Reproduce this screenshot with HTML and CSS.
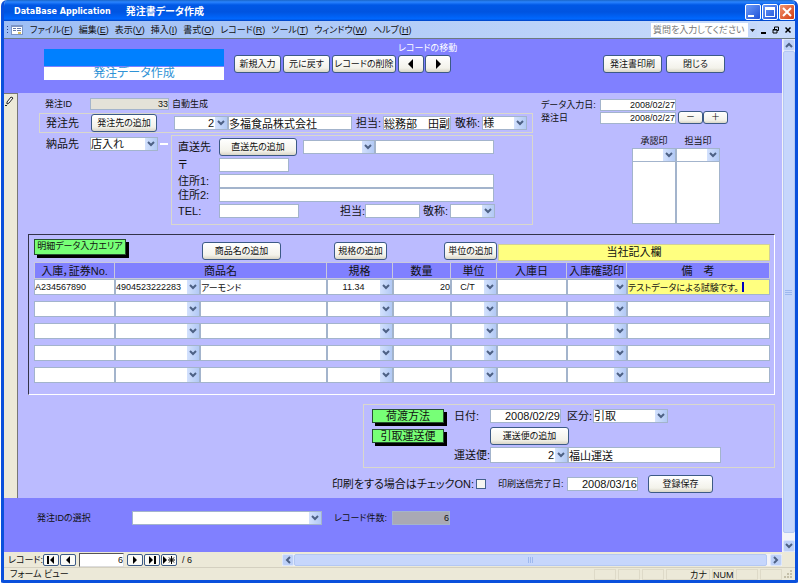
FILE: index.html
```html
<!DOCTYPE html>
<html lang="ja">
<head>
  <meta charset="UTF-8">
  <meta name="viewport" content="width=device-width, initial-scale=1.0">
  <title>発注書データ作成</title>
  <link rel="stylesheet" href="styles.css">
</head>
<body>
  <div class="window">
    <header class="titlebar">
      <h1><span>DataBase Application</span><span>発注書データ作成</span></h1>
      <div class="window-buttons">
        <button type="button" aria-label="最小化"><svg width="16" height="16"><path d="M3 11h6v2H3z" fill="#fff"/></svg></button>
        <button type="button" aria-label="最大化"><svg width="16" height="16"><path d="M3 3h10v10H3zM4 6v6h8V6z" fill="#fff" fill-rule="evenodd"/></svg></button>
        <button type="button" class="close" aria-label="閉じる"><svg width="16" height="16"><path d="M4 4l8 8M12 4l-8 8" stroke="#fff" stroke-width="2"/></svg></button>
      </div>
    </header>

    <nav class="menubar">
      <svg class="grip" width="2" height="10"><path d="M0 1h1v1H0zM0 4h1v1H0zM0 7h1v1H0z" fill="#27418f"/></svg>
      <svg class="form-icon" width="12" height="10"><path d="M0 0h12v10H0z" fill="#7b93c4"/><path d="M1 2h10v7H1z" fill="#fff"/><path d="M2 3h3v1H2zM2 5h3v1H2zM6 3h4v1H6zM6 5h4v1H6z" fill="#6679a8"/><path d="M7 7h3v2H7z" fill="#d8c060"/></svg>
      <button type="button">ファイル(<u>F</u>)</button>
      <button type="button">編集(<u>E</u>)</button>
      <button type="button">表示(<u>V</u>)</button>
      <button type="button">挿入(<u>I</u>)</button>
      <button type="button">書式(<u>O</u>)</button>
      <button type="button">レコード(<u>R</u>)</button>
      <button type="button">ツール(<u>T</u>)</button>
      <button type="button">ウィンドウ(<u>W</u>)</button>
      <button type="button">ヘルプ(<u>H</u>)</button>
      <input class="question" type="text" placeholder="質問を入力してください" aria-label="質問">
      <svg class="question-arrow" width="9" height="14"><path d="M2 6h5L4.500 9z" fill="#222"/></svg>
      <div class="child-buttons">
        <button type="button" aria-label="ウィンドウの最小化"><svg width="8" height="8"><path d="M1 6h5v2H1z"/></svg></button>
        <button type="button" aria-label="元のサイズに戻す"><svg width="8" height="8"><path d="M2.500 3V1h4v3.500H5M1 3.500h4V7H1zM1 4h4" fill="none" stroke="#000"/></svg></button>
        <button type="button" aria-label="ウィンドウを閉じる"><svg width="8" height="8"><path d="M1.500 1.500l5 5M6.500 1.500l-5 5" stroke="#000" stroke-width="1.500"/></svg></button>
      </div>
    </nav>

    <div class="workspace">
      <main class="sheet">
        <section class="form-header">
          <div class="banner">
            <div class="banner-bar"></div>
            <h2>発注データ作成</h2>
          </div>
          <div class="header-actions">
            <button type="button" class="btn">新規入力</button>
            <button type="button" class="btn">元に戻す</button>
            <button type="button" class="btn btn-delete">レコードの削除</button>
          </div>
          <div class="record-move">
            <span>レコードの移動</span>
            <div class="move-buttons">
              <button type="button" class="btn" aria-label="前のレコード"><svg width="8" height="10"><path d="M6 0v10L1 5z"/></svg></button>
              <button type="button" class="btn" aria-label="次のレコード"><svg width="8" height="10"><path d="M2 0v10l5-5z"/></svg></button>
            </div>
          </div>
          <div class="header-actions header-right">
            <button type="button" class="btn">発注書印刷</button>
            <button type="button" class="btn">閉じる</button>
          </div>
        </section>

        <div class="form-body">
          <div class="selector">
            <svg width="10" height="10"><path d="M2 6l4-5 2 1-4 5-2 1z" fill="#fff" stroke="#222"/><path d="M0 9.500h2" stroke="#222"/></svg>
          </div>

          <div class="form">
            <div class="top">
              <div class="top-left">
                <div class="row row-id">
                  <label class="small" for="order-id">発注ID</label>
                  <input id="order-id" class="num locked" type="text" value="33" readonly>
                  <span class="small">自動生成</span>
                </div>

                <div class="frame row row-supplier">
                  <label for="supplier">発注先</label>
                  <button type="button" class="btn">発注先の追加</button>
                  <select id="supplier" class="num"><option>2</option></select>
                  <input class="supplier-name" type="text" value="多福食品株式会社" aria-label="発注先名">
                  <label for="supplier-person">担当:</label>
                  <input id="supplier-person" class="person" type="text" value="総務部　田副">
                  <label for="supplier-title">敬称:</label>
                  <select id="supplier-title" class="honor"><option>様</option></select>
                </div>

                <div class="delivery">
                  <div class="row row-place">
                    <label for="place">納品先</label>
                    <select id="place"><option>店入れ</option></select>
                    <span class="connector"></span>
                  </div>
                  <div class="frame direct">
                    <div class="row row-direct">
                      <label for="direct">直送先</label>
                      <button type="button" class="btn">直送先の追加</button>
                      <select id="direct"><option></option></select>
                      <input class="direct-name" type="text" aria-label="直送先名">
                    </div>
                    <div class="row"><label for="zip">〒</label><input id="zip" type="text"></div>
                    <div class="row"><label for="address1">住所1:</label><input id="address1" class="address" type="text"></div>
                    <div class="row joined"><label for="address2">住所2:</label><input id="address2" class="address" type="text"></div>
                    <div class="row row-tel">
                      <label for="tel">TEL:</label>
                      <input id="tel" type="text">
                      <label class="contact-label" for="direct-person">担当:</label>
                      <input id="direct-person" type="text">
                      <label class="honor-label" for="direct-title">敬称:</label>
                      <select id="direct-title" class="honor"><option></option></select>
                    </div>
                  </div>
                </div>
              </div>

              <div class="top-right">
                <div class="row small">
                  <label for="entry-date">データ入力日:</label>
                  <input id="entry-date" class="num" type="text" value="2008/02/27">
                </div>
                <div class="row small">
                  <label for="order-date">発注日</label>
                  <input id="order-date" class="num" type="text" value="2008/02/27">
                  <div class="step-buttons">
                    <button type="button" class="btn">－</button>
                    <button type="button" class="btn">＋</button>
                  </div>
                </div>
                <div class="stamps">
                  <div class="stamp">
                    <label class="small" for="approve">承認印</label>
                    <select id="approve"><option></option></select>
                    <div class="stamp-box"></div>
                  </div>
                  <div class="stamp">
                    <label class="small" for="charge">担当印</label>
                    <select id="charge"><option></option></select>
                    <div class="stamp-box"></div>
                  </div>
                </div>
              </div>
            </div>

            <section class="detail">
              <div class="detail-tools">
                <span class="tag tag-area">明細データ入力エリア</span>
                <button type="button" class="btn btn-item">商品名の追加</button>
                <button type="button" class="btn">規格の追加</button>
                <button type="button" class="btn">単位の追加</button>
                <div class="own-entry">当社記入欄</div>
              </div>
              <table>
                <colgroup>
                  <col class="c-voucher"><col class="c-code"><col class="c-name"><col class="c-spec"><col class="c-qty"><col class="c-unit"><col class="c-date"><col class="c-check"><col>
                </colgroup>
                <thead>
                  <tr>
                    <th>入庫，証券No.</th>
                    <th colspan="2">商品名</th>
                    <th>規格</th>
                    <th>数量</th>
                    <th>単位</th>
                    <th>入庫日</th>
                    <th>入庫確認印</th>
                    <th>備　考</th>
                  </tr>
                </thead>
                <tbody>
                  <tr>
                    <td><input type="text" value="A234567890" aria-label="証券No."></td>
                    <td><select aria-label="商品コード"><option>4904523222283</option></select></td>
                    <td><input type="text" value="アーモンド" aria-label="商品名"></td>
                    <td><select class="center" aria-label="規格"><option>11.34</option></select></td>
                    <td><input class="num" type="text" value="20" aria-label="数量"></td>
                    <td><select class="center" aria-label="単位"><option>C/T</option></select></td>
                    <td><input type="text" aria-label="入庫日"></td>
                    <td><select aria-label="入庫確認印"><option></option></select></td>
                    <td><input class="editing" type="text" value="テストデータによる試験です。" aria-label="備考"></td>
                  </tr>
                  <tr>
                    <td><input type="text" aria-label="証券No."></td>
                    <td><select aria-label="商品コード"><option></option></select></td>
                    <td><input type="text" aria-label="商品名"></td>
                    <td><select aria-label="規格"><option></option></select></td>
                    <td><input type="text" aria-label="数量"></td>
                    <td><select aria-label="単位"><option></option></select></td>
                    <td><input type="text" aria-label="入庫日"></td>
                    <td><select aria-label="入庫確認印"><option></option></select></td>
                    <td><input type="text" aria-label="備考"></td>
                  </tr>
                  <tr>
                    <td><input type="text" aria-label="証券No."></td>
                    <td><select aria-label="商品コード"><option></option></select></td>
                    <td><input type="text" aria-label="商品名"></td>
                    <td><select aria-label="規格"><option></option></select></td>
                    <td><input type="text" aria-label="数量"></td>
                    <td><select aria-label="単位"><option></option></select></td>
                    <td><input type="text" aria-label="入庫日"></td>
                    <td><select aria-label="入庫確認印"><option></option></select></td>
                    <td><input type="text" aria-label="備考"></td>
                  </tr>
                  <tr>
                    <td><input type="text" aria-label="証券No."></td>
                    <td><select aria-label="商品コード"><option></option></select></td>
                    <td><input type="text" aria-label="商品名"></td>
                    <td><select aria-label="規格"><option></option></select></td>
                    <td><input type="text" aria-label="数量"></td>
                    <td><select aria-label="単位"><option></option></select></td>
                    <td><input type="text" aria-label="入庫日"></td>
                    <td><select aria-label="入庫確認印"><option></option></select></td>
                    <td><input type="text" aria-label="備考"></td>
                  </tr>
                  <tr>
                    <td><input type="text" aria-label="証券No."></td>
                    <td><select aria-label="商品コード"><option></option></select></td>
                    <td><input type="text" aria-label="商品名"></td>
                    <td><select aria-label="規格"><option></option></select></td>
                    <td><input type="text" aria-label="数量"></td>
                    <td><select aria-label="単位"><option></option></select></td>
                    <td><input type="text" aria-label="入庫日"></td>
                    <td><select aria-label="入庫確認印"><option></option></select></td>
                    <td><input type="text" aria-label="備考"></td>
                  </tr>
                </tbody>
              </table>
            </section>

            <section class="frame shipping">
              <div class="ship-tags">
                <span class="tag">荷渡方法</span>
                <span class="tag">引取運送便</span>
              </div>
              <div class="ship-fields">
                <div class="row row-shipdate">
                  <label for="ship-date">日付:</label>
                  <input id="ship-date" class="num" type="text" value="2008/02/29">
                  <label class="kind-label" for="ship-kind">区分:</label>
                  <select id="ship-kind"><option>引取</option></select>
                </div>
                <div class="row row-carrier-add">
                  <button type="button" class="btn">運送便の追加</button>
                </div>
                <div class="row row-carrier">
                  <label for="carrier">運送便:</label>
                  <select id="carrier" class="num"><option>2</option></select>
                  <input type="text" value="福山運送" aria-label="運送便名">
                </div>
              </div>
            </section>

            <div class="row print-row">
              <label for="print-on">印刷をする場合はチェックON:</label>
              <input id="print-on" type="checkbox">
              <label class="small sent-label" for="sent-date">印刷送信完了日:</label>
              <input id="sent-date" class="num" type="text" value="2008/03/16">
              <button type="button" class="btn">登録保存</button>
            </div>
          </div>
        </div>

        <footer class="form-footer">
          <label for="pick-id">発注IDの選択</label>
          <select id="pick-id"><option></option></select>
          <label class="count-label" for="count">レコード件数:</label>
          <input id="count" class="num" type="text" value="6" readonly>
        </footer>
      </main>

      <div class="vscroll">
        <button type="button" aria-label="上へ"><svg width="8" height="6"><path d="M1 5l3-3 3 3" fill="none" stroke="#4d6185" stroke-width="2"/></svg></button>
        <div class="thumb"><svg width="8" height="5"><path d="M0 .5h7M0 2.500h7M0 4.500h7" stroke="#9db8ee"/></svg></div>
        <button type="button" aria-label="下へ"><svg width="8" height="6"><path d="M1 1l3 3 3-3" fill="none" stroke="#4d6185" stroke-width="2"/></svg></button>
      </div>
    </div>

    <div class="record-nav">
      <label for="record-no">レコード:</label>
      <button type="button" aria-label="先頭"><svg width="10" height="8"><path d="M1 0h2v8H1zM8 0v8L4 4z"/></svg></button>
      <button type="button" aria-label="前"><svg width="10" height="8"><path d="M7 0v8L3 4z"/></svg></button>
      <input id="record-no" class="num" type="text" value="6">
      <button type="button" aria-label="次"><svg width="10" height="8"><path d="M3 0v8l4-4z"/></svg></button>
      <button type="button" aria-label="最後"><svg width="10" height="8"><path d="M2 0v8l4-4zM7 0h2v8H7z"/></svg></button>
      <button type="button" aria-label="新規"><svg width="12" height="8"><path d="M0 0v8l4-4z"/><path d="M8.500 0v8M5 4h7M6 1.500l5 5M11 1.500l-5 5" stroke="#000"/></svg></button>
      <span class="total">/ 6</span>
      <div class="hscroll">
        <button type="button" aria-label="左へ"><svg width="6" height="8"><path d="M5 1L2 4l3 3" fill="none" stroke="#4d6185" stroke-width="2"/></svg></button>
        <div class="thumb"><svg width="6" height="6"><path d="M.5 0v6M2.500 0v6M4.500 0v6" stroke="#9db8ee"/></svg></div>
        <button type="button" aria-label="右へ"><svg width="6" height="8"><path d="M1 1l3 3-3 3" fill="none" stroke="#4d6185" stroke-width="2"/></svg></button>
      </div>
    </div>

    <div class="statusbar">
      <span class="status-text">フォーム ビュー</span>
      <span class="cell"></span>
      <span class="cell"></span>
      <span class="cell"></span>
      <span class="cell cell-kana">カナ</span>
      <span class="cell">NUM</span>
      <span class="cell"></span>
      <span class="cell"></span>
      <svg width="9" height="9"><path d="M6 0h2v2H6zM3 3h2v2H3zM6 3h2v2H6zM0 6h2v2H0zM3 6h2v2H3zM6 6h2v2H6z" fill="#c4bfa8"/></svg>
    </div>
  </div>
</body>
</html>
```
FILE: styles.css
```css
* {
  box-sizing: border-box;
}

body {
  margin: 0;
  background: #fff;
  color: #111;
  font-family: "Liberation Sans", "Noto Sans CJK JP", sans-serif;
  font-size: 11px;
  line-height: 14px;
  font-feature-settings: "palt";
}

h1, h2 {
  margin: 0;
}

button, input, select {
  font: inherit;
  font-feature-settings: inherit;
  color: inherit;
  margin: 0;
  padding: 0;
}

svg {
  display: block;
  flex: none;
}

label, span, button {
  white-space: nowrap;
}

/* window */
.window {
  margin: 0 2px 0 1px;
  border: 3px solid #0a50dc;
  border-top: 0;
  border-radius: 6px 6px 2px 2px;
  background: #ece9d8;
  overflow: hidden;
}

.titlebar {
  display: flex;
  justify-content: space-between;
  height: 21px;
  margin: 0 -3px;
  padding: 4px 3px 0 13px;
  background: linear-gradient(#1a66c8 0, #2a84ff 2px, #0058e6 5px, #0054e0 12px, #0068ff 19px, #0040c0 21px);
}

.titlebar h1 {
  display: flex;
  gap: 15px;
  color: #fff;
  font-size: 10px;
  line-height: 16px;
}

.titlebar h1 span:first-child {
  font-family: "DejaVu Sans", sans-serif;
  font-size: 8px;
}

.window-buttons {
  display: flex;
  gap: 1px;
}

.window-buttons button {
  width: 16px;
  height: 16px;
  border: 1px solid #fff;
  border-radius: 2px;
  background: linear-gradient(135deg, #6c9bf8, #1f52d8);
  overflow: hidden;
}

.window-buttons svg {
  margin: -1px;
}

.window-buttons .close {
  background: linear-gradient(135deg, #f0936f, #d43c10);
}

/* menu */
.menubar {
  display: flex;
  align-items: center;
  height: 18px;
  padding: 0 3px;
  border-bottom: 1px solid #6d7a80;
  background: linear-gradient(90deg, #9ebef5, #c9dcfb);
  font-size: 9px;
}

.menubar button {
  margin-right: 6px;
  border: 0;
  background: none;
}

.form-icon {
  margin: 0 7px 0 2px;
}

.menubar .question {
  width: 97px;
  height: 14px;
  margin-left: auto;
  padding-left: 2px;
  border: 0;
  background: #fff;
}

.question::placeholder {
  color: #777;
}

.question-arrow {
  background: #c4d8fa;
}

.child-buttons {
  display: flex;
  gap: 4px;
  margin-left: 3px;
}

.child-buttons button {
  width: 8px;
  margin: 0;
}

.workspace {
  display: flex;
}

.sheet {
  flex: 1;
  min-width: 0;
}

/* controls */
.btn {
  height: 18px;
  border: 1px solid #3c5a86;
  border-radius: 3px;
  background: linear-gradient(#fff, #f3f2ea 75%, #d9d5c6);
  font-size: 9px;
  line-height: 14px;
  text-align: center;
}

.btn svg {
  margin: 0 auto;
}

input[type="text"],
select {
  min-width: 0;
  height: 14px;
  border: 1px solid #a3b4cc;
  border-radius: 0;
  background-color: #fff;
  line-height: 12px;
  outline: 0;
}

select {
  appearance: none;
  padding-right: 13px;
  background-image:
    url("data:image/svg+xml,%3Csvg xmlns='http://www.w3.org/2000/svg' width='12' height='6'%3E%3Cpath d='M3 1l3 3 3-3' fill='none' stroke='%234d6185' stroke-width='2'/%3E%3C/svg%3E"),
    linear-gradient(90deg, #d3e1fd, #b2c9f5);
  background-position: right center, right top;
  background-size: 12px 6px, 12px 100%;
  background-repeat: no-repeat;
}

.num {
  text-align: right;
  text-align-last: right;
}

.center {
  text-align-last: center;
}

.small,
.small input {
  font-size: 9px;
}

.row {
  display: flex;
  align-items: center;
}

.row > * {
  flex: none;
}

.frame {
  border: 1px solid #d9d8cc;
}

.tag {
  border: 1px solid #264f30;
  background: #77ff77;
  box-shadow: 3px 3px 0 #000;
  line-height: 12px;
  text-align: center;
}

/* form header */
.form-header {
  display: flex;
  height: 54px;
  padding: 0 57px 0 40px;
  background: #8080ff;
}

.banner {
  width: 180px;
  margin: 10px 10px 0 0;
}

.banner-bar {
  height: 17px;
  background: #0080ff;
}

.banner h2 {
  margin-top: 1px;
  background: #fff;
  color: #2f93d6;
  font-size: 12px;
  font-weight: normal;
  line-height: 13px;
  text-align: center;
}

.header-actions {
  display: flex;
  gap: 2px;
  padding-top: 16px;
}

.header-actions .btn {
  width: 47px;
}

.header-actions .btn-delete {
  width: 64px;
}

.record-move {
  margin-left: 2px;
  padding-top: 2px;
  color: #fff;
  font-size: 9px;
}

.record-move span {
  display: block;
}

.move-buttons {
  display: flex;
  gap: 1px;
}

.move-buttons .btn {
  width: 26px;
}

.header-right {
  gap: 4px;
  margin-left: auto;
}

.header-right .btn {
  width: 59px;
}

/* form body */
.form-body {
  display: flex;
  background: #bbbbff;
}

.selector {
  width: 14px;
  padding: 2px 1px;
  border: 1px solid #777;
  border-width: 1px 1px 0 0;
  background: #ece9d8;
}

.form {
  flex: 1;
  min-width: 0;
  padding: 5px 7px 5px 10px;
}

.top {
  display: flex;
  gap: 8px;
  margin-left: 11px;
}

.top-left {
  width: 494px;
}

.row-id {
  margin-bottom: 3px;
  padding-left: 6px;
  line-height: 12px;
}

.row-id label {
  width: 45px;
}

.row-id input[type="text"] {
  width: 79px;
  height: 12px;
  margin-right: 3px;
  background: #e4e2d8;
  font-size: 9px;
  line-height: 10px;
}

.row-supplier {
  margin-bottom: 2px;
  padding-left: 6px;
}

.row-supplier .btn {
  width: 66px;
  margin: 0 17px 0 12px;
}

.row-supplier select {
  width: 54px;
}

.row-supplier .supplier-name {
  width: 124px;
  margin-right: 4px;
}

.row-supplier .person {
  width: 68px;
  margin: 0 4px 0 2px;
}

.row .honor {
  width: 45px;
  margin-left: 2px;
}

.delivery {
  display: flex;
}

.row-place {
  align-self: flex-start;
  padding: 2px 3px 0 7px;
}

.row-place label {
  width: 44px;
}

.row-place select {
  width: 68px;
}

.connector {
  width: 8px;
  height: 2px;
  margin-left: 2px;
  background: #fff;
}

.direct {
  flex: 1;
  padding: 2px 0 6px 6px;
}

.direct .row + .row {
  margin-top: 2px;
}

.direct .row + .joined {
  margin-top: 0;
}

.direct label:first-child {
  width: 41px;
}

.direct .btn {
  width: 78px;
  margin-right: 6px;
}

.row-direct select {
  width: 72px;
}

.row-direct .direct-name {
  width: 119px;
}

.direct #zip {
  width: 70px;
}

.direct .address {
  width: 275px;
}

.row-tel #tel {
  width: 80px;
}

.row-tel .contact-label {
  margin-left: 41px;
}

.row-tel #direct-person {
  width: 55px;
}

.row-tel .honor-label {
  margin-left: 3px;
}

.top-right .row {
  height: 13px;
}

.top-right .row label {
  width: 59px;
}

.top-right .row input {
  width: 76px;
  height: 12px;
  line-height: 10px;
}

.step-buttons {
  display: flex;
  margin-left: 2px;
}

.step-buttons .btn {
  width: 25px;
  height: 13px;
  line-height: 11px;
}

.stamps {
  display: flex;
  width: 88px;
  margin: 10px 0 0 91px;
}

.stamp {
  flex: 1;
  display: flex;
  flex-direction: column;
  text-align: center;
}

.stamp-box {
  height: 62px;
  border: 1px solid #a3b4cc;
  border-top: 0;
  background: #fff;
}

/* detail lines */
.detail {
  margin-top: 9px;
  padding: 4px 4px 5px 5px;
  border: 1px solid;
  border-color: #33334a #fff #fff #33334a;
}

.detail-tools {
  display: grid;
  grid-template-columns: 168px 132px 110px 54px 1fr;
  align-items: end;
}

.tag-area {
  justify-self: start;
  align-self: start;
  width: 92px;
  height: 16px;
  font-size: 9px;
}

.detail-tools .btn {
  width: 53px;
  margin: 3px 0 2px;
}

.detail-tools .btn-item {
  width: 79px;
}

.own-entry {
  margin-bottom: 1px;
  border: 1px solid #cfcf9c;
  background: #ffff80;
  line-height: 15px;
  text-align: center;
}

table {
  width: 100%;
  border-spacing: 0;
  table-layout: fixed;
}

.c-voucher { width: 81px; }
.c-code { width: 85px; }
.c-name { width: 127px; }
.c-spec { width: 66px; }
.c-qty { width: 58px; }
.c-unit { width: 46px; }
.c-date { width: 70px; }
.c-check { width: 60px; }

th {
  height: 17px;
  padding: 0;
  border: 1px solid #c8c8dd;
  border-left-width: 0;
  background: #8080ff;
  font-weight: normal;
  line-height: 14px;
  white-space: nowrap;
}

th:first-child {
  border-left-width: 1px;
}

td {
  padding: 0 0 6px;
  font-size: 9px;
}

td input[type="text"],
td select {
  display: block;
  width: 100%;
  height: 16px;
  line-height: 14px;
}

/* current field, with the text cursor at the end */
td .editing {
  background: #ffff80 linear-gradient(#0000c0, #0000c0) 114px center / 2px 10px no-repeat;
}

/* shipping */
.shipping {
  display: flex;
  width: 412px;
  margin: 9px 0 0 auto;
  padding: 4px 0 4px 8px;
}

.ship-tags {
  display: flex;
  flex-direction: column;
  gap: 6px;
  width: 82px;
}

.ship-tags .tag {
  width: 72px;
}

.ship-fields label:first-child {
  width: 36px;
}

.row-shipdate #ship-date {
  width: 71px;
}

.row-shipdate .kind-label {
  margin-left: 6px;
}

.row-shipdate #ship-kind {
  width: 75px;
  margin-left: 1px;
}

.row-carrier-add {
  margin: 4px 0 2px 36px;
}

.row-carrier-add .btn {
  width: 79px;
}

.row-carrier #carrier {
  width: 78px;
  height: 16px;
}

.row-carrier input[type="text"] {
  width: 153px;
  height: 16px;
}

.print-row {
  justify-content: flex-end;
  margin-top: 7px;
  padding-right: 62px;
}

.print-row input[type="checkbox"] {
  appearance: none;
  width: 10px;
  height: 10px;
  margin-left: 2px;
  border: 1px solid #44618c;
  background: #f5f5f0;
}

.print-row .sent-label {
  width: 69px;
  margin-left: 12px;
}

.print-row #sent-date {
  width: 71px;
}

.print-row .btn {
  width: 65px;
  margin-left: 10px;
}

/* form footer */
.form-footer {
  display: flex;
  height: 54px;
  padding: 13px 33px;
  background: #8080ff;
  font-size: 9px;
}

.form-footer label:first-child {
  width: 95px;
}

.form-footer select {
  width: 190px;
}

.form-footer .count-label {
  width: 58px;
  margin-left: 12px;
}

.form-footer #count {
  width: 58px;
  background: #a9a9b4;
}

/* scroll bars */
.vscroll {
  display: flex;
  flex-direction: column;
  width: 13px;
  padding-left: 1px;
  background: #f3f3f8;
}

.vscroll button,
.hscroll button {
  display: flex;
  align-items: center;
  justify-content: center;
  width: 12px;
  height: 12px;
  border: 1px solid #dce6fc;
  border-radius: 2px;
  background: #bdd0f8;
}

.thumb {
  display: flex;
  flex: 1;
  align-items: center;
  justify-content: center;
  border: 1px solid #b4c8f2;
  border-radius: 2px;
  background: #c6d6fc;
}

.vscroll .thumb {
  margin-bottom: 7px;
}

/* record navigation */
.record-nav {
  display: flex;
  align-items: center;
  height: 15px;
  padding: 0 13px 0 4px;
  font-size: 9px;
}

.record-nav label {
  width: 35px;
}

.record-nav > button {
  display: flex;
  align-items: center;
  justify-content: center;
  width: 16px;
  height: 12px;
  margin-right: 1px;
  border: 1px solid #3c5a86;
  border-radius: 2px;
  background: #fafaf6;
}

.record-nav #record-no {
  width: 45px;
  margin: 0 3px 0 2px;
  border-color: #555 #ddd #ddd #555;
}

.total {
  margin-left: 4px;
}

.hscroll {
  display: flex;
  width: 500px;
  margin-left: auto;
  background: #f3f3f8;
}

.hscroll .thumb {
  margin-right: 3px;
}

/* status bar */
.statusbar {
  display: flex;
  align-items: center;
  height: 13px;
  padding: 0 2px 0 6px;
  border-top: 1px solid #d4d0c0;
  font-size: 9px;
  line-height: 12px;
}

.status-text {
  flex: 1;
}

.statusbar .cell {
  width: 22px;
  height: 11px;
  margin-right: 2px;
  border: 1px solid #dedac8;
  line-height: 10px;
  text-align: center;
}

.statusbar .cell-kana {
  width: 44px;
  padding-right: 2px;
  text-align: right;
}
```
